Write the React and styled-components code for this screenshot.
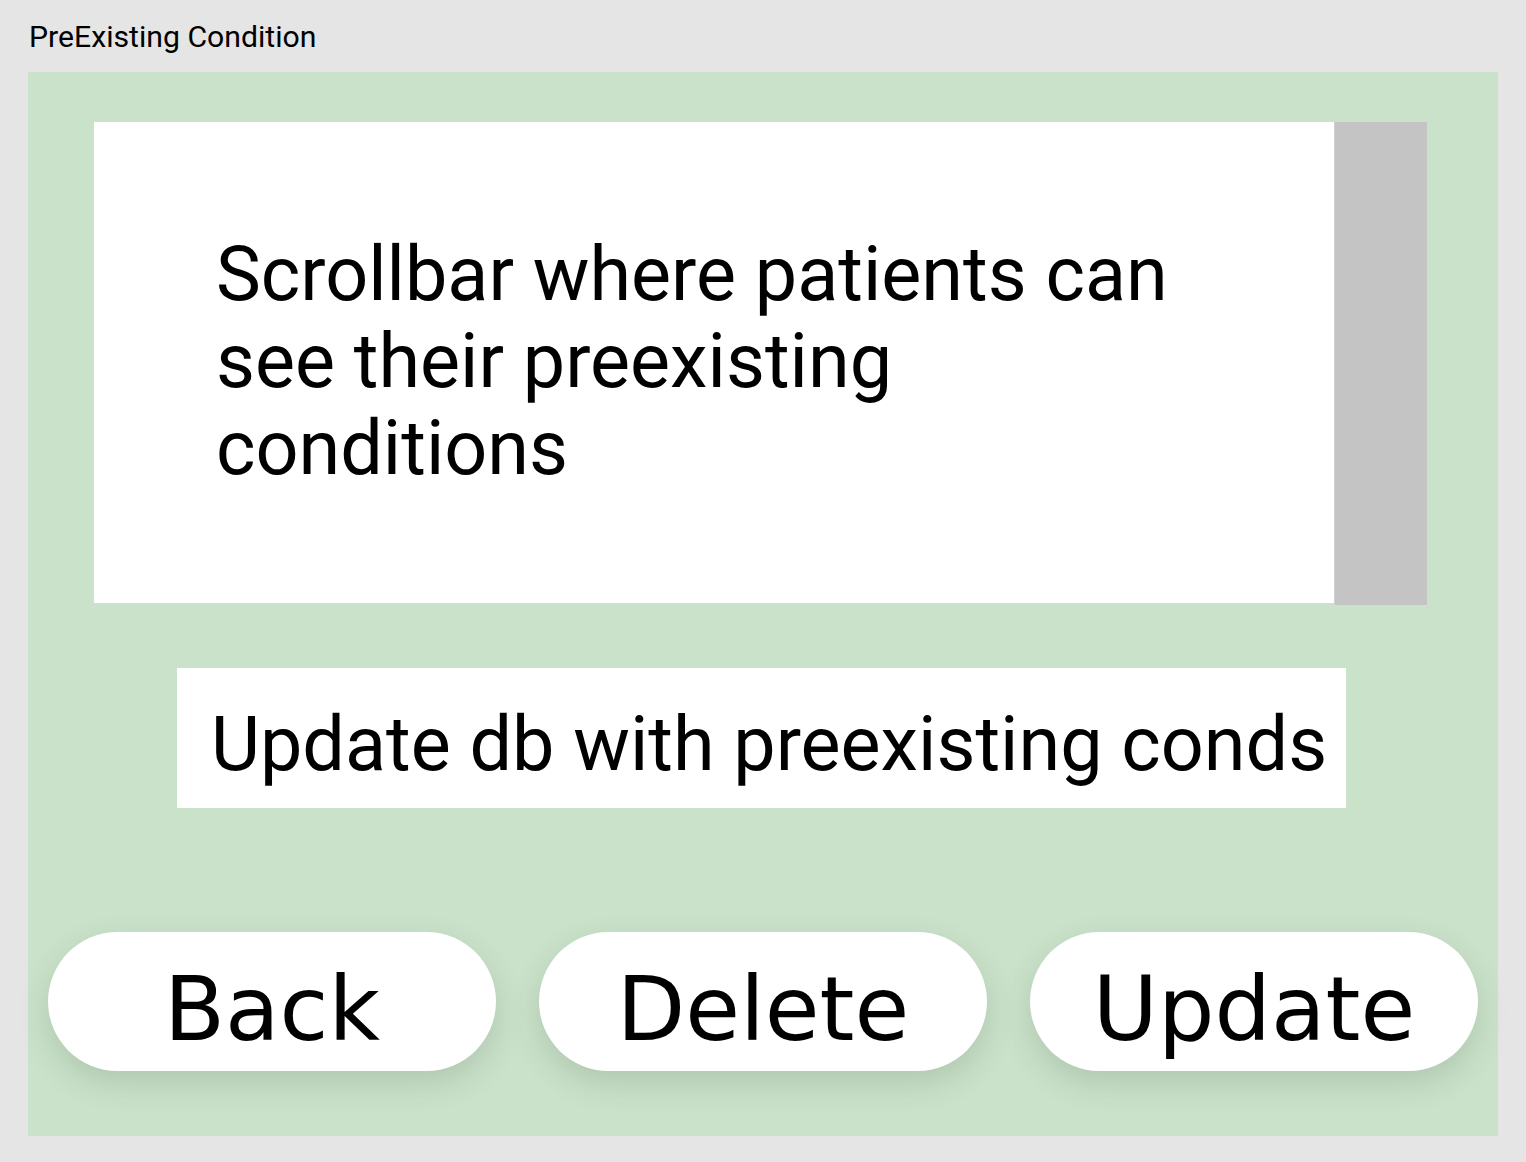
import React from "react";
import styled, { createGlobalStyle } from "styled-components";

const GlobalStyle = createGlobalStyle`
  body {
    margin: 0;
    background: #e5e5e5;
    font-family: Roboto, "Liberation Sans", sans-serif;
  }
`;

const App = () => {
  const buttons = ["Back", "Delete", "Update"];
  return (
    <Page>
      <GlobalStyle />
      <Header>PreExisting Condition</Header>
      <Panel>
        <ListRow>
          <ListBox>
            <ListText>
              Scrollbar where patients can see their preexisting conditions
            </ListText>
          </ListBox>
          <Scrollbar />
        </ListRow>
        <UpdateBox>Update db with preexisting conds</UpdateBox>
        <ButtonRow>
          {buttons.map((label) => (
            <PillButton key={label}>{label}</PillButton>
          ))}
        </ButtonRow>
      </Panel>
    </Page>
  );
};

const Page = styled.div`
  width: 1526px;
  height: 1162px;
  box-sizing: border-box;
  padding: 0 28px;
`;

const Header = styled.div`
  height: 72px;
  box-sizing: border-box;
  padding-top: 19px;
  padding-left: 1px;
  font-size: 30.2px;
  line-height: 35px;
  color: #000;
`;

const Panel = styled.div`
  width: 1470px;
  height: 1064px;
  box-sizing: border-box;
  background: #cae1ca;
  padding-top: 50px;
  display: flex;
  flex-direction: column;
`;

const ListRow = styled.div`
  display: flex;
  align-items: flex-start;
  margin-left: 66px;
`;

const ListBox = styled.div`
  width: 1240px;
  height: 481px;
  box-sizing: border-box;
  background: #fff;
  padding: 109px 0 0 122px;
`;

const ListText = styled.p`
  margin: 0;
  width: 1040px;
  font-size: 75.5px;
  line-height: 87px;
  color: #000;
`;

const Scrollbar = styled.div`
  width: 93px;
  height: 483px;
  background: #c4c4c4;
  border-left: 1px solid #d0d0d0;
  box-sizing: border-box;
`;

const UpdateBox = styled.div`
  margin: 63px 0 0 149px;
  width: 1169px;
  height: 140px;
  box-sizing: border-box;
  background: #fff;
  padding: 12px 0 0 34px;
  display: flex;
  align-items: center;
  font-size: 75.5px;
  color: #000;
  white-space: nowrap;
`;

const ButtonRow = styled.div`
  margin-top: 124px;
  display: flex;
  gap: 43px;
  padding-left: 20px;
`;

const PillButton = styled.button`
  width: 448px;
  height: 139px;
  border: none;
  border-radius: 70px;
  background: #fff;
  box-shadow: 0 12px 30px rgba(60, 90, 60, 0.18);
  font-family: "DejaVu Sans", "Noto Sans", sans-serif;
  font-size: 89px;
  color: #000;
  padding: 0;
  padding-top: 15px;
  cursor: pointer;
`;

export default App;
